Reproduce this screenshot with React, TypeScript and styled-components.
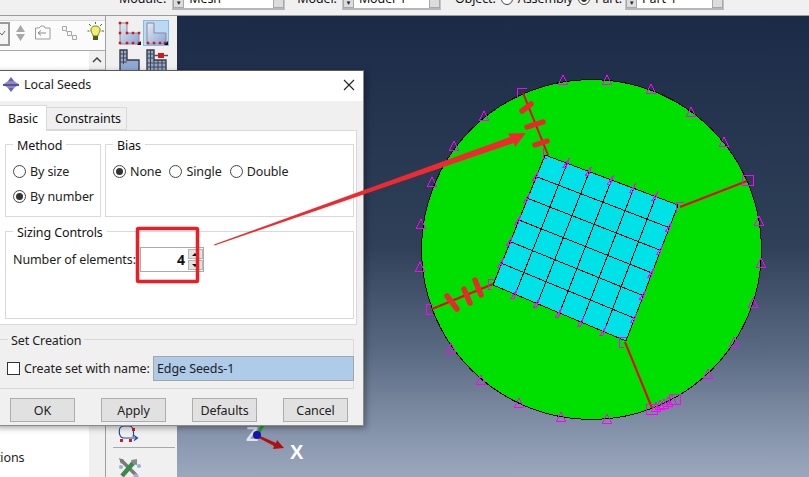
import React from 'react'
import styled, { createGlobalStyle } from 'styled-components'

const GlobalStyle = createGlobalStyle`
  html, body {
    margin: 0;
    padding: 0;
    overflow: hidden;
    background: #f0f0f0;
    font-family: "Noto Sans", "Open Sans", sans-serif;
    font-size: 12.5px;
    letter-spacing: -0.1px;
    color: #1c1c1c;
  }
`

const Page = styled.div`
  position: relative;
  width: 809px;
  height: 477px;
  overflow: hidden;
  display: flex;
  flex-direction: column;
  background: #f0f0f0;
`

const ContextBar = styled.div`
  flex: none;
  height: 10px;
  padding: 0 0 5px 119px;
  display: flex;
  align-items: flex-end;
  overflow: hidden;
  border-bottom: 1px solid #9a9a9a;
`

const BarLabel = styled.span<{ $left?: number }>`
  flex: none;
  margin-left: ${p => p.$left ?? 0}px;
  margin-bottom: 4px;
  line-height: 14px;
  color: #111;
`

const Combo = styled.div<{ $width: number; $left?: number }>`
  flex: none;
  width: ${p => p.$width}px;
  margin-left: ${p => p.$left ?? 4}px;
  height: 22px;
  display: flex;
  background: #fff;
  border: 1px solid #c4c4c4;
  box-sizing: border-box;
  border-bottom: 2px solid #b5b5b5;
`

const ComboButton = styled.div`
  flex: none;
  width: 11px;
  background: #dcdcdc;
  border: 1px solid #a8a8a8;
  box-sizing: border-box;
  display: flex;
  align-items: flex-end;
  justify-content: center;
  padding-bottom: 1px;
  color: #222;
  font-size: 6px;
  line-height: 6px;
`

const ComboText = styled.span`
  flex: 1;
  align-self: flex-end;
  margin-bottom: 2px;
  padding-left: 5px;
  line-height: 14px;
  color: #111;
  overflow: hidden;
  white-space: nowrap;
`

const BarRadio = styled.span<{ $checked?: boolean }>`
  flex: none;
  width: 12px;
  height: 12px;
  margin: 0 5px 5px 5px;
  border: 1px solid #444;
  border-radius: 50%;
  background: #fff;
  box-sizing: border-box;
  display: flex;
  align-items: center;
  justify-content: center;
  &::after {
    content: '';
    width: 6px;
    height: 6px;
    border-radius: 50%;
    background: ${p => (p.$checked ? '#333' : 'transparent')};
  }
`

const Workspace = styled.div`
  flex: 1;
  display: flex;
  min-height: 0;
`

const ModelPane = styled.div`
  flex: none;
  width: 105px;
  display: flex;
  flex-direction: column;
  border-right: 1px solid #a0a0a0;
  background: #f0f0f0;
`

const TreeToolbar = styled.div`
  flex: none;
  height: 29px;
  margin-top: 4px;
  display: flex;
  align-items: center;
  background: #fbfbfb;
  border-top: 1px solid #d8d8d8;
  border-bottom: 1px solid #a8a8a8;
`

const TreeBody = styled.div`
  flex: 1;
  display: flex;
  min-height: 0;
`

const TreeList = styled.div`
  flex: 1;
  background: #fff;
  display: flex;
  flex-direction: column;
  justify-content: flex-end;
  padding-bottom: 10px;
  overflow: hidden;
  white-space: nowrap;
`

const TreeItem = styled.div`
  margin-left: -46px;
  line-height: 18px;
`

const TreeScroll = styled.div`
  flex: none;
  width: 16px;
  background: #f0f0f0;
  display: flex;
  flex-direction: column;
`

const ScrollUp = styled.div`
  height: 18px;
  display: flex;
  align-items: center;
  justify-content: center;
`

const ScrollThumb = styled.div`
  height: 20px;
  background: #cdcdcd;
`

const Toolbox = styled.div`
  flex: none;
  width: 71px;
  display: flex;
  flex-direction: column;
  background: #f0f0f0;
`

const ToolGrid = styled.div`
  margin: 4px 0 0 9px;
  display: grid;
  grid-template-columns: 28px 26px;
  grid-auto-rows: 26px;
  row-gap: 1px;
`

const ToolCell = styled.div<{ $active?: boolean }>`
  display: flex;
  align-items: center;
  justify-content: center;
  box-sizing: border-box;
  background: ${p => (p.$active ? '#bcd8f3' : 'transparent')};
  border: 1px solid ${p => (p.$active ? '#7cbcf0' : 'transparent')};
`

const ToolFooter = styled.div`
  margin-top: auto;
  margin-bottom: -4px;
  padding-left: 7px;
  display: flex;
  flex-direction: column;
  align-items: flex-start;
`

const FooterIcon = styled.div`
  margin-left: 4px;
  display: flex;
`

const ToolRule = styled.div`
  width: 62px;
  height: 1px;
  margin: 5px 0 9px;
  background: #a8a8a8;
`

const Viewport = styled.div`
  position: relative;
  flex: 1;
  background: linear-gradient(
    to bottom,
    #1b2b47 0%,
    #24344f 20%,
    #2f4058 50%,
    #5a6a82 73%,
    #8593aa 90%,
    #9ba7bd 100%
  );
`

const Scene = styled.svg`
  position: absolute;
  inset: 0;
  width: 632px;
  height: 461px;
`

const Dialog = styled.div`
  position: absolute;
  left: -6px;
  top: 70px;
  width: 370px;
  height: 356px;
  display: flex;
  flex-direction: column;
  background: #f0f0f0;
  border-top: 1px solid #5a5a5a;
  border-right: 1px solid #8a8a8a;
  border-bottom: 1px solid #8a8a8a;
  box-sizing: border-box;
  box-shadow: 2px 2px 6px rgba(0, 0, 0, 0.35);
`

const TitleBar = styled.div`
  flex: none;
  height: 30px;
  box-sizing: border-box;
  padding: 0 8px 3px 9px;
  display: flex;
  align-items: center;
  gap: 5px;
  background: #fff;
`

const TitleText = styled.span`
  flex: 1;
  color: #222;
`

const TabRow = styled.div`
  flex: none;
  height: 30px;
  display: flex;
  align-items: flex-end;
  margin-bottom: -1px;
  position: relative;
`

const Tab = styled.div<{ $active?: boolean }>`
  box-sizing: border-box;
  height: ${p => (p.$active ? 26 : 23)}px;
  width: ${p => (p.$active ? 53 : 80)}px;
  padding-left: ${p => (p.$active ? 13 : 8)}px;
  margin-bottom: ${p => (p.$active ? 0 : 1)}px;
  display: flex;
  align-items: center;
  background: ${p => (p.$active ? '#fff' : '#f0f0f0')};
  border: 1px solid #d9d9d9;
  border-bottom: ${p => (p.$active ? '0' : '1px solid #d9d9d9')};
  border-left: ${p => (p.$active ? '1px solid #d9d9d9' : '0')};
  color: #111;
`

const TabPanel = styled.div`
  flex: none;
  width: 363px;
  height: 195px;
  box-sizing: border-box;
  padding: 6px 3px 0 10px;
  background: #fff;
  border: 1px solid #d9d9d9;
  display: flex;
  flex-direction: column;
  gap: 7px;
`

const GroupRow = styled.div`
  display: flex;
  gap: 4px;
`

const Group = styled.fieldset<{ $width: number; $height: number }>`
  width: ${p => p.$width}px;
  height: ${p => p.$height}px;
  box-sizing: border-box;
  flex: none;
  margin: 0;
  padding: 0;
  border: 1px solid #d9d9d9;
  min-width: 0;
`

const GroupLegend = styled.legend`
  margin-left: 7px;
  padding: 0 4px;
  line-height: 14px;
  color: #111;
  transform: translateY(2px);
`

const OptionColumn = styled.div`
  padding: 11px 0 0 7px;
  display: flex;
  flex-direction: column;
  gap: 7px;
`

const OptionRow = styled.div`
  padding: 11px 0 0 7px;
  display: flex;
  gap: 8px;
`

const Option = styled.label`
  display: flex;
  align-items: center;
  gap: 4px;
  height: 18px;
  color: #222;
`

const RadioMark = styled.span<{ $checked?: boolean }>`
  flex: none;
  width: 13px;
  height: 13px;
  box-sizing: border-box;
  border: 1px solid #444;
  border-radius: 50%;
  background: #fff;
  display: flex;
  align-items: center;
  justify-content: center;
  &::after {
    content: '';
    width: 7px;
    height: 7px;
    border-radius: 50%;
    background: ${p => (p.$checked ? '#333' : 'transparent')};
  }
`

const SizingRow = styled.div`
  padding: 9px 0 0 7px;
  display: flex;
  align-items: center;
  color: #222;
`

const SizingLabel = styled.span`
  flex: none;
  width: 127px;
  white-space: nowrap;
`

const Spinner = styled.div`
  flex: none;
  width: 64px;
  height: 25px;
  box-sizing: border-box;
  border: 1px solid #aaa;
  background: #fff;
  display: flex;
  align-items: center;
  justify-content: flex-end;
  gap: 3px;
  font-size: 14px;
  font-weight: 700;
  color: #111;
`

const SpinButtons = styled.div`
  flex: none;
  width: 15px;
  height: 100%;
  display: flex;
  flex-direction: column;
  gap: 1px;
  padding: 1px 0;
  box-sizing: border-box;
`

const SpinButton = styled.div<{ $down?: boolean }>`
  flex: 1;
  background: #e3e3e3;
  border: 1px solid #b5b5b5;
  position: relative;
  &::after {
    content: '';
    position: absolute;
    left: 3px;
    top: 3px;
    border-left: 3px solid transparent;
    border-right: 3px solid transparent;
    ${p => (p.$down ? 'border-top: 3px solid #111;' : 'border-bottom: 3px solid #111;')}
  }
`

const SetGroup = styled.fieldset`
  flex: none;
  width: 360px;
  height: 57px;
  box-sizing: border-box;
  margin: 7px 0 0 0;
  padding: 0;
  min-width: 0;
  border: 1px solid #d9d9d9;
  border-left: 0;
`

const SetLegend = styled.legend`
  margin-left: 14px;
  padding: 0 3px;
  line-height: 14px;
  color: #222;
  transform: translateY(2px);
`

const SetRow = styled.div`
  padding: 10px 0 0 13px;
  display: flex;
  align-items: center;
  white-space: nowrap;
  color: #222;
`

const CheckBox = styled.span`
  flex: none;
  width: 13px;
  height: 13px;
  margin-right: 4px;
  box-sizing: border-box;
  border: 1px solid #333;
  background: #fff;
`

const SetLabel = styled.span`
  flex: none;
  width: 129px;
`

const NameField = styled.div`
  flex: none;
  width: 201px;
  height: 25px;
  box-sizing: border-box;
  padding-left: 3px;
  display: flex;
  align-items: center;
  background: #aecbe9;
  border: 1px solid #a6a6a6;
  color: #222;
`

const ButtonRow = styled.div`
  flex: none;
  display: flex;
  gap: 26px;
  padding: 9px 0 0 16px;
`

const DialogButton = styled.div`
  width: 65px;
  height: 24px;
  box-sizing: border-box;
  display: flex;
  align-items: center;
  justify-content: center;
  background: #e1e1e1;
  border: 1px solid #adadad;
  color: #222;
`

const Annotation = styled.svg`
  position: absolute;
  inset: 0;
  width: 809px;
  height: 477px;
  pointer-events: none;
`

type Pt = [number, number]

const TL: Pt = [545, 155]
const TR: Pt = [678, 205]
const BR: Pt = [626, 341]
const BL: Pt = [493, 285]

const mix = (a: Pt, b: Pt, t: number): Pt => [a[0] + (b[0] - a[0]) * t, a[1] + (b[1] - a[1]) * t]
const steps = [1, 2, 3, 4, 5].map(i => i / 6)

const rimSeeds: Pt[] = [
  [563, 80], [607, 80], [484, 116], [454, 146], [432, 182], [421, 224],
  [651, 89], [691, 112], [724, 142], [759, 221], [420, 267], [451, 348],
  [481, 380], [519, 403], [561, 417], [607, 419], [761, 263], [753, 303],
  [734, 342], [708, 374], [656, 407], [660, 405], [664, 404], [668, 402], [672, 400],
]

const edgeSeeds: Pt[] = [
  ...steps.map(t => mix(TL, TR, t)),
  ...steps.map(t => mix(TR, BR, t)),
  ...steps.map(t => mix(BL, BR, t)),
  ...steps.map(t => mix(TL, BL, t)),
]

const partitions: [Pt, Pt][] = [
  [[523, 93], [548, 155]],
  [[680, 207], [747, 181]],
  [[432, 309], [493, 284]],
  [[625, 342], [652, 408]],
]

const seedMarks: [number, number, number, number][] = [
  [522, 111, 531, 104], [527, 127, 543, 122], [535, 145, 547, 141],
  [447, 296, 457, 309], [464, 289, 470, 303], [475, 280, 481, 295],
]

const brackets: string[] = [
  'M517 98V88H527', 'M543 148V158H547', 'M684 202H676V213', 'M742 175H753V185H742Z',
  'M433 304H426V314H433', 'M495 279H488V289H492', 'M627 337H619V347H624',
  'M646 404H657V414H646Z', 'M669 394H680V404H669Z',
]

function ModelScene() {
  return (
    <Scene viewBox="177 16 632 461">
      <g shapeRendering="crispEdges">
        <circle cx={591.5} cy={249.5} r={170} fill="#00e000" stroke="#000" strokeWidth={1} />
        <polygon points={[TL, TR, BR, BL].map(p => p.join(',')).join(' ')} fill="#00e2e8" stroke="#000" strokeWidth={1} />
        {steps.map(t => {
          const a = mix(TL, TR, t)
          const b = mix(BL, BR, t)
          const c = mix(TL, BL, t)
          const d = mix(TR, BR, t)
          return (
            <g key={t} stroke="#000" strokeWidth={1}>
              <line x1={a[0]} y1={a[1]} x2={b[0]} y2={b[1]} />
              <line x1={c[0]} y1={c[1]} x2={d[0]} y2={d[1]} />
            </g>
          )
        })}
      </g>
      {partitions.map(([a, b], i) => (
        <line key={i} x1={a[0]} y1={a[1]} x2={b[0]} y2={b[1]} stroke="#f00010" strokeWidth={2} />
      ))}
      <g fill="none" stroke="#ff00ff" strokeWidth={1} shapeRendering="crispEdges">
        {rimSeeds.map(([x, y], i) => (
          <path key={i} d={`M${x - 4.5} ${y + 4}H${x + 4.5}L${x} ${y - 5}Z`} />
        ))}
        {edgeSeeds.map(([x, y], i) => (
          <path key={i} d={`M${x - 4} ${y + 4}H${x - 1}L${x + 2} ${y - 5}Z`} />
        ))}
        {brackets.map(d => (
          <path key={d} d={d} />
        ))}
      </g>
      <g stroke="#e8282e" strokeWidth={5.5} strokeLinecap="round">
        {seedMarks.map(([x1, y1, x2, y2]) => (
          <line key={x1} x1={x1} y1={y1} x2={x2} y2={y2} />
        ))}
      </g>
      <line x1={258} y1={434} x2={263} y2={425} stroke="#18a818" strokeWidth={3} />
      <polygon points="258,435 276,443 277,440 284,448 273,449 274,446 257,437" fill="#b01010" />
      <text x={246} y={441} fontFamily="Liberation Sans" fontWeight={700} fontSize={20} fill="#e0e4ec">Z</text>
      <circle cx={257} cy={435} r={4} fill="#1414b4" />
      <text x={290} y={459} fontFamily="Liberation Sans" fontWeight={700} fontSize={20} fill="#fff">X</text>
    </Scene>
  )
}

const cornerSeeds: Pt[] = [[3, 2], [10, 2], [3, 12], [3, 22], [10, 12], [16, 12], [22, 12], [10, 22], [16, 22], [22, 22]]
const bottomSeeds: Pt[] = [[4, 22], [10, 22], [16, 22], [21, 22]]

function ShapeIcon({ mesh, partitioned, seeds, corner }: { mesh?: boolean; partitioned?: boolean; seeds?: Pt[]; corner?: boolean }) {
  return (
    <svg width={24} height={24} viewBox="0 0 24 24">
      <defs>
        <linearGradient id="lshape" x1="0" y1="0" x2="1" y2="1">
          <stop offset="0" stopColor="#e6e8f2" />
          <stop offset="1" stopColor="#8aa6d6" />
        </linearGradient>
      </defs>
      <path d="M3 2H10V12H22V23H3Z" fill={mesh ? '#8ea8d4' : 'url(#lshape)'} stroke={mesh ? '#3a3a4a' : '#8a8a98'} strokeWidth={mesh ? 1.4 : 1} />
      {mesh && !partitioned && <path d="M3 6H10M3 10H10M6.500 2V16M3 14H10" stroke="#444" strokeWidth={1} fill="none" />}
      {partitioned && <path d="M3 6H10M3 10H10M6.500 2V23M3 15H22M3 19H22M10 12V23M14 12V23M18 12V23" stroke="#444" strokeWidth={1} fill="none" />}
      {seeds && (
        <g fill="#d01818">
          {seeds.map(([x, y]) => (
            <rect key={`${x}-${y}`} x={x - 1.25} y={y - 1.25} width={2.5} height={2.5} />
          ))}
        </g>
      )}
      {corner && <path d="M24 20V24H20Z" fill="#111" />}
      {partitioned && (
        <g>
          <path d="M10 7.500H24" stroke="#555" strokeWidth={1.5} />
          <rect x={14} y={5} width={6} height={5} fill="#d01818" />
        </g>
      )}
    </svg>
  )
}

function TreeTools() {
  return (
    <svg width={105} height={29} viewBox="0 0 105 29">
      <rect x={-4} y={2} width={13} height={22} fill="#f4f4f4" stroke="#9a9a9a" strokeWidth={2} />
      <path d="M0 12L2 14L5 10" stroke="#666" fill="none" />
      <path d="M16 11L20.500 4L25 11ZM16 13H25L20.500 20Z" fill="#a8a8a8" />
      <path d="M35.500 7H39L41 5H44L45 7H50V18H35.500Z" fill="#fcfcfc" stroke="#9a9a9a" />
      <path d="M38 12H46M38 12L41 9.500M38 12L41 14.500" stroke="#8a8a8a" fill="none" />
      <path d="M62.500 5.500H66.500V9.500H62.500ZM67.500 10.500H71.500V14.500H67.500ZM72.500 14.500H76.500V18.500H72.500Z" fill="#f6f6f6" stroke="#a8a8a8" />
      <path d="M65 9.500L68 11M71 14L73 15" stroke="#b0b0b0" />
      <path d="M95.500 5C99 5 100.500 7.500 100 10C99.500 12 98 13 98 15H93C93 13 91.500 12 91 10C90.500 7.500 92 5 95.500 5Z" fill="#f4ef70" stroke="#6a7a28" />
      <rect x={93} y={15} width={5} height={4} fill="#4a5a28" />
      <path d="M95.500 1V3M89 3L91 5M102 3L100 5M87.500 10H89.500M101.500 10H104" stroke="#3a7a28" />
    </svg>
  )
}

export default function App() {
  return (
    <Page>
      <GlobalStyle />
      <ContextBar>
        <BarLabel>Module:</BarLabel>
        <Combo $width={113} $left={6}>
          <ComboButton>▼</ComboButton>
          <ComboText>Mesh</ComboText>
          <ComboButton />
        </Combo>
        <BarLabel $left={12}>Model:</BarLabel>
        <Combo $width={99} $left={5}>
          <ComboButton>▼</ComboButton>
          <ComboText>Model-1</ComboText>
          <ComboButton />
        </Combo>
        <BarLabel $left={14}>Object:</BarLabel>
        <BarRadio />
        <BarLabel>Assembly</BarLabel>
        <BarRadio $checked />
        <BarLabel>Part:</BarLabel>
        <Combo $width={99} $left={3}>
          <ComboButton>▼</ComboButton>
          <ComboText>Part-1</ComboText>
          <ComboButton />
        </Combo>
      </ContextBar>
      <Workspace>
        <ModelPane>
          <TreeToolbar>
            <TreeTools />
          </TreeToolbar>
          <TreeBody>
            <TreeList>
              <TreeItem>Annotations</TreeItem>
            </TreeList>
            <TreeScroll>
              <ScrollUp>
                <svg width={10} height={6} viewBox="0 0 10 6">
                  <path d="M1 5L5 1L9 5" stroke="#444" strokeWidth={1.5} fill="none" />
                </svg>
              </ScrollUp>
              <ScrollThumb />
            </TreeScroll>
          </TreeBody>
        </ModelPane>
        <Toolbox>
          <ToolGrid>
            <ToolCell><ShapeIcon seeds={cornerSeeds} corner /></ToolCell>
            <ToolCell $active><ShapeIcon seeds={bottomSeeds} corner /></ToolCell>
            <ToolCell><ShapeIcon mesh /></ToolCell>
            <ToolCell><ShapeIcon mesh partitioned /></ToolCell>
          </ToolGrid>
          <ToolFooter>
            <FooterIcon>
              <svg width={22} height={18} viewBox="0 0 22 18">
                <path d="M6 14C1 12 1 3 6 2H13C17 3 17 10 16 13" stroke="#1c4ea8" strokeWidth={1.2} fill="none" />
                <path d="M6 14H20M17 11.500L20.500 14L17 16.500" stroke="#1c4ea8" strokeWidth={1.2} fill="none" />
                <rect x={3} y={15} width={3} height={3} fill="#c82020" />
                <rect x={12} y={15} width={3} height={3} fill="#c82020" />
                <rect x={15} y={4} width={3} height={3} fill="#c82020" />
              </svg>
            </FooterIcon>
            <ToolRule />
            <FooterIcon>
              <svg width={24} height={24} viewBox="0 0 24 24">
                <path d="M4 3L19 18" stroke="#7a7a7a" strokeWidth={3.5} />
                <path d="M2 1L7 3L4 7Z" fill="#7a7a7a" />
                <path d="M17 5L5 19" stroke="#3a8a4a" strokeWidth={4.5} />
                <path d="M14 3L20 2L20 8L16 7Z" fill="#8a8a8a" />
                <circle cx={4} cy={10} r={2} fill="#9ab0d0" />
                <circle cx={22} cy={9} r={2} fill="#9ab0d0" />
                <circle cx={19} cy={19} r={2.5} fill="#9ab0d0" />
              </svg>
            </FooterIcon>
          </ToolFooter>
        </Toolbox>
        <Viewport>
          <ModelScene />
        </Viewport>
      </Workspace>

      <Dialog>
        <TitleBar>
          <svg width={16} height={17} viewBox="0 0 16 17">
            <path d="M5 5L8 1L11 5Z M5 12L8 16L11 12Z" fill="#6a5fb0" />
            <path d="M0 8.500L5 5H11L16 8.500L11 12H5Z" fill="#8d87c4" />
            <rect x={0} y={8} width={16} height={2} fill="#5a50a0" />
          </svg>
          <TitleText>Local Seeds</TitleText>
          <svg width={12} height={12} viewBox="0 0 12 12">
            <path d="M1 1L11 11M11 1L1 11" stroke="#222" strokeWidth={1.1} />
          </svg>
        </TitleBar>
        <TabRow>
          <Tab $active>Basic</Tab>
          <Tab>Constraints</Tab>
        </TabRow>
        <TabPanel>
          <GroupRow>
            <Group $width={96} $height={80}>
              <GroupLegend>Method</GroupLegend>
              <OptionColumn>
                <Option><RadioMark />By size</Option>
                <Option><RadioMark $checked />By number</Option>
              </OptionColumn>
            </Group>
            <Group $width={249} $height={80}>
              <GroupLegend>Bias</GroupLegend>
              <OptionRow>
                <Option><RadioMark $checked />None</Option>
                <Option><RadioMark />Single</Option>
                <Option><RadioMark />Double</Option>
              </OptionRow>
            </Group>
          </GroupRow>
          <Group $width={349} $height={95}>
            <GroupLegend>Sizing Controls</GroupLegend>
            <SizingRow>
              <SizingLabel>Number of elements:</SizingLabel>
              <Spinner>
                4
                <SpinButtons>
                  <SpinButton />
                  <SpinButton $down />
                </SpinButtons>
              </Spinner>
            </SizingRow>
          </Group>
        </TabPanel>
        <SetGroup>
          <SetLegend>Set Creation</SetLegend>
          <SetRow>
            <CheckBox />
            <SetLabel>Create set with name:</SetLabel>
            <NameField>Edge Seeds-1</NameField>
          </SetRow>
        </SetGroup>
        <ButtonRow>
          <DialogButton>OK</DialogButton>
          <DialogButton>Apply</DialogButton>
          <DialogButton>Defaults</DialogButton>
          <DialogButton>Cancel</DialogButton>
        </ButtonRow>
      </Dialog>

      <Annotation viewBox="0 0 809 477">
        <rect x={137.5} y={228.5} width={60} height={53} rx={1} fill="none" stroke="#ee1c25" strokeWidth={3.5} />
        <polygon points="214,244.5 214.5,245.5 514,143 515,147 526,133 508,133.500 510,137" fill="#ee2a30" />
      </Annotation>
    </Page>
  )
}
